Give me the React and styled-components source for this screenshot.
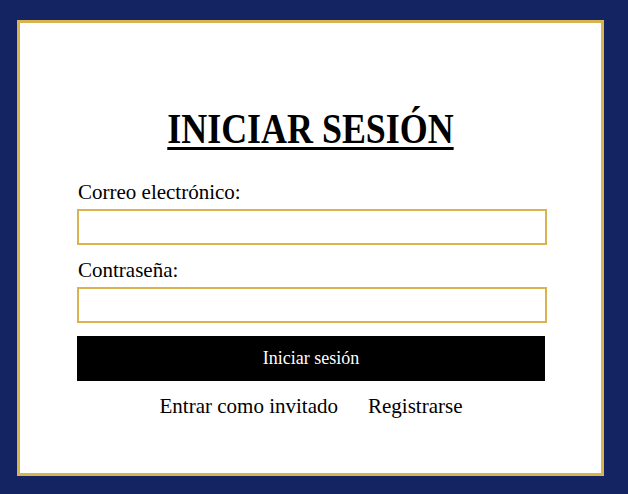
import React from 'react'
import styled, { createGlobalStyle } from 'styled-components'

const GlobalStyle = createGlobalStyle`
    html, body {
        margin: 0;
        padding: 0;
        background: #142462;
        font-family: "Liberation Serif", "Times New Roman", serif;
    }
`

class App extends React.Component {

    render() {
        return(
            <Page>
                <GlobalStyle />
                <Card>
                    <Title>INICIAR SESIÓN</Title>
                    <Form onSubmit={e => e.preventDefault()}>
                        <Label htmlFor="email">Correo electrónico:</Label>
                        <Input id="email" type="email" />
                        <Label htmlFor="password">Contraseña:</Label>
                        <Input id="password" type="password" />
                        <Button type="submit">Iniciar sesión</Button>
                        <Links>
                            <Link href="#">Entrar como invitado</Link>
                            <Link href="#">Registrarse</Link>
                        </Links>
                    </Form>
                </Card>
            </Page>
        )
    }
}

export default App

const Page = styled.div`
    width: 628px;
    height: 494px;
    box-sizing: border-box;
    padding: 20px 0 0 17px;
`

const Card = styled.div`
    width: 587px;
    height: 456px;
    box-sizing: border-box;
    background: white;
    border: 3px solid #d9b34f;
    padding-top: 82px;
    display: flex;
    flex-direction: column;
    align-items: center;
`

const Title = styled.h1`
    margin: 0;
    font-size: 42px;
    line-height: 48px;
    font-weight: bold;
    color: black;
    text-decoration: underline;
    text-decoration-thickness: 3px;
    text-underline-offset: 4px;
    transform: scaleX(0.855);
    white-space: nowrap;
`

const Form = styled.form`
    width: 470px;
    margin: 27px 0 0 3px;
    display: flex;
    flex-direction: column;
`

const Label = styled.label`
    font-size: 21px;
    line-height: 24px;
    color: black;
    margin-left: 1px;
    margin-bottom: 5px;
`

const Input = styled.input`
    width: 470px;
    height: 36px;
    box-sizing: border-box;
    border: 2px solid #d9b34f;
    outline: none;
    margin: 0 0 13px 0;
    padding: 0 8px;
    font-family: inherit;
    font-size: 18px;
`

const Button = styled.button`
    width: 468px;
    height: 45px;
    border: none;
    background: black;
    color: white;
    font-family: inherit;
    font-size: 18px;
    cursor: pointer;
    margin-bottom: 13px;
`

const Links = styled.div`
    display: flex;
    justify-content: center;
    gap: 30px;
    margin-left: -2px;
`

const Link = styled.a`
    font-size: 21px;
    line-height: 24px;
    color: black;
    text-decoration: none;
`
